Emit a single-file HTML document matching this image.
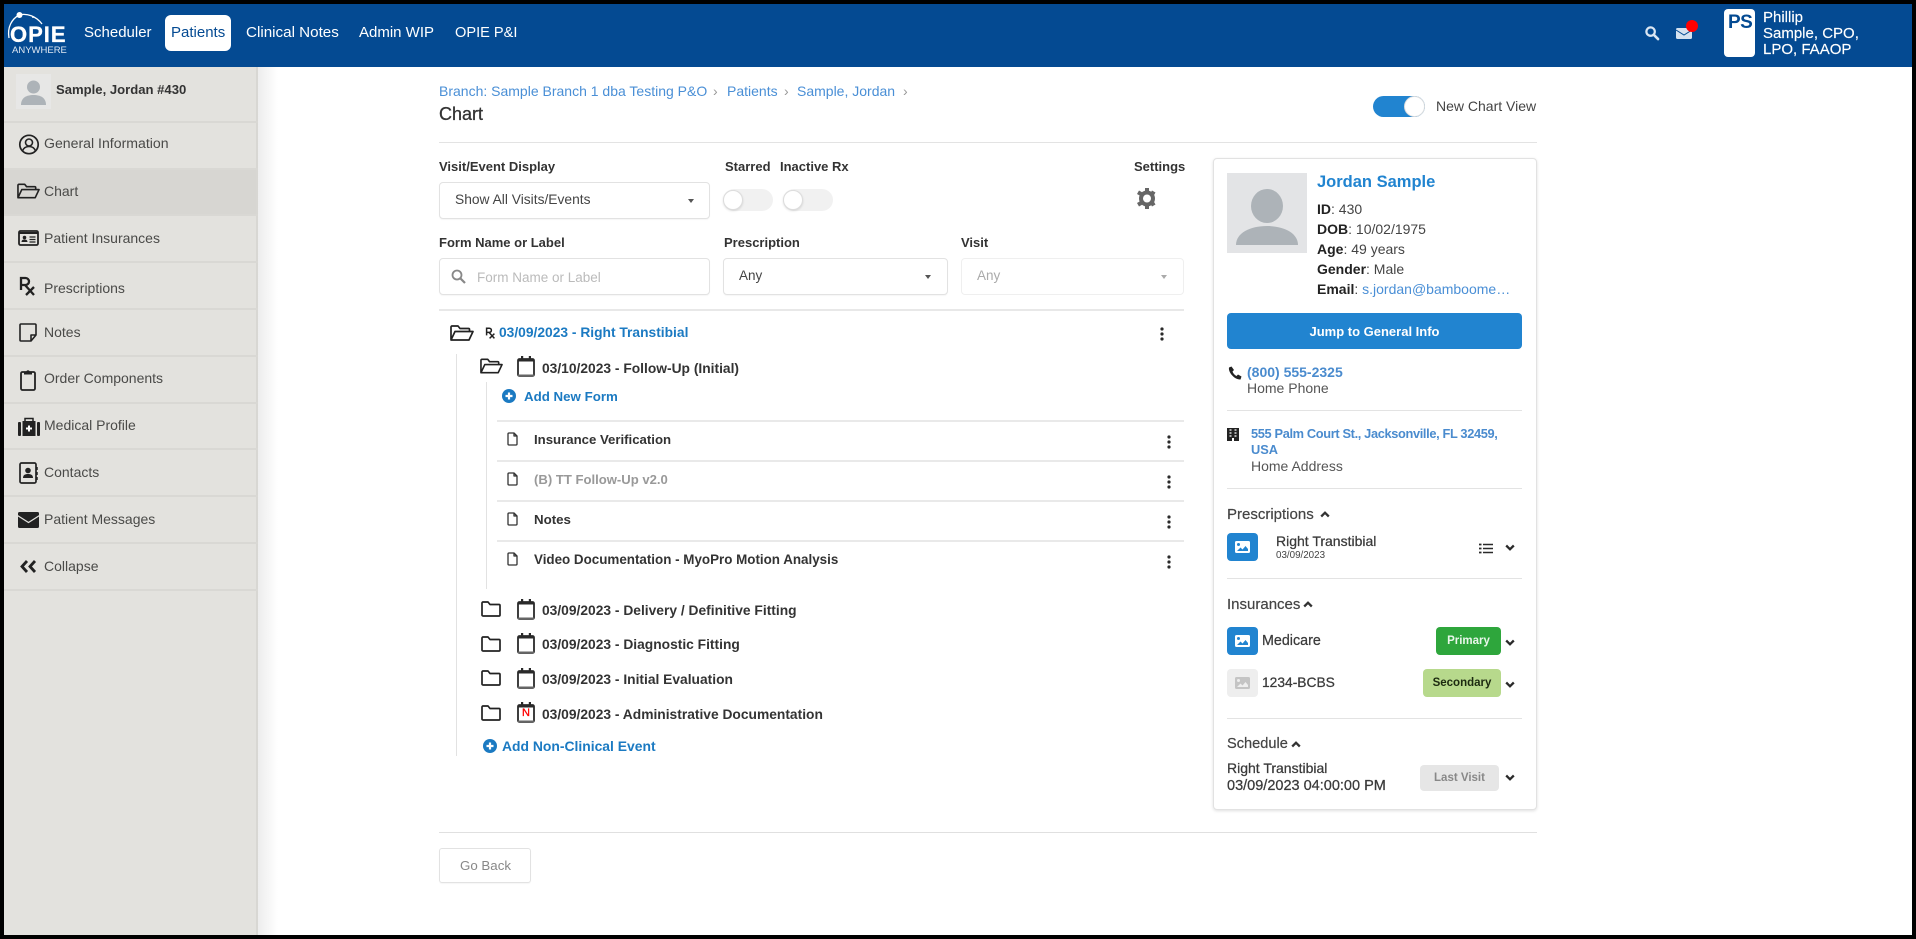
<!DOCTYPE html>
<html><head><meta charset="utf-8"><title>Chart</title>
<style>
*{box-sizing:border-box}
html,body{margin:0;padding:0;width:1916px;height:939px;overflow:hidden;background:#000}
body{font-family:"Liberation Sans",sans-serif;position:relative}
#p{position:absolute;left:0;top:0;width:1916px;height:939px}
.a{position:absolute}
.t{position:absolute;white-space:nowrap;line-height:20px;font-size:14px}
.l{position:absolute;height:1px;background:#e3e3e3}
.b{font-weight:bold}
.nav{color:#fff;font-size:15px;top:23px}
.si{left:44px;color:#4a4a48;font-size:14px}
.sb{position:absolute;left:4px;width:254px;height:2px;background:#d9d8d4}
.lab{font-weight:bold;font-size:13px;color:#333}
.box{position:absolute;border:1px solid #e2e2e2;border-radius:4px;background:#fff;box-shadow:0 1px 1px rgba(0,0,0,.04)}
.tr{font-weight:bold;font-size:13px;color:#333}
.d{font-size:13.800px}
.blue{color:#1b7ac2}
.lk{color:#4a8fd6}
.caret{position:absolute;width:0;height:0;border-left:3.500px solid transparent;border-right:3.500px solid transparent;border-top:4px solid #555}
svg{position:absolute;overflow:visible}
.sw{position:absolute;width:50px;height:22px;border-radius:11px;background:#f1f1f1}
.sw i{position:absolute;left:0;top:1px;width:20px;height:20px;border-radius:50%;background:#fff;border:1px solid #ddd;box-shadow:0 1px 2px rgba(0,0,0,.12)}
.hd{font-size:15px;color:#444;-webkit-text-stroke:.2px #444}
.dk{font-size:14px;color:#3a3a3a;-webkit-text-stroke:.25px #3a3a3a}
.badge{position:absolute;border-radius:4px;text-align:center;font-size:11.500px;font-weight:bold;height:28px;line-height:28px}
.ib{position:absolute;left:1227px;width:31px;height:28px;border-radius:4px;background:#2184d0}
.rl{position:absolute;left:497px;width:687px;height:2px;background:#e9e9e9}
</style></head><body>
<svg width="0" height="0" style="position:absolute">
<defs>
<symbol id="fo" viewBox="0 0 24 16"><path d="M1 14.500V2a1 1 0 0 1 1-1h6l2 2.500h8.500a1 1 0 0 1 1 1V6.500M1 15l4-8.500h18L19 15z" fill="none" stroke="#222" stroke-width="1.700" stroke-linejoin="round"/></symbol>
<symbol id="fc" viewBox="0 0 20 16"><path d="M1 14V2a1 1 0 0 1 1-1h5l2 2.500h9a1 1 0 0 1 1 1V14a1 1 0 0 1-1 1H2a1 1 0 0 1-1-1z" fill="none" stroke="#222" stroke-width="1.700" stroke-linejoin="round"/></symbol>
<symbol id="cal" viewBox="0 0 18 21"><rect x="1" y="3" width="16" height="17" rx="1.500" fill="#fff" stroke="#2a2a2a" stroke-width="1.800"/><rect x="1" y="3" width="16" height="2.500" fill="#2a2a2a"/><rect x="4" y="0" width="2.200" height="4" fill="#2a2a2a"/><rect x="11.800" y="0" width="2.200" height="4" fill="#2a2a2a"/><rect x="1" y="18.500" width="16" height="2" fill="#666"/></symbol>
<symbol id="keb" viewBox="0 0 4 14"><circle cx="2" cy="2" r="1.600" fill="#2a2a2a"/><circle cx="2" cy="7" r="1.600" fill="#2a2a2a"/><circle cx="2" cy="12" r="1.600" fill="#2a2a2a"/></symbol>
<symbol id="file" viewBox="0 0 11 14"><path d="M1 2a1 1 0 0 1 1-1h5l3 3v8a1 1 0 0 1-1 1H2a1 1 0 0 1-1-1zM7 1v3h3" fill="none" stroke="#333" stroke-width="1.300" stroke-linejoin="round"/></symbol>
<symbol id="plus" viewBox="0 0 14 14"><circle cx="7" cy="7" r="7" fill="#1b7ac2"/><path d="M7 3.500v7M3.500 7h7" stroke="#fff" stroke-width="2.200"/></symbol>
<symbol id="dn" viewBox="0 0 10 7"><path d="M1.200 1.500L5 5.300l3.800-3.800" fill="none" stroke="#2a2a2a" stroke-width="2.300"/></symbol>
<symbol id="up" viewBox="0 0 10 7"><path d="M1.200 5.500L5 1.700l3.800 3.800" fill="none" stroke="#333" stroke-width="2.300"/></symbol>
<symbol id="pic" viewBox="0 0 15 12"><rect width="15" height="12" rx="1.500" fill="currentColor"/><circle cx="3.500" cy="3.500" r="1.500" fill="var(--k)"/><path d="M2 10l3.500-3.500 2 2L10.500 5 13 8v2z" fill="var(--k)"/></symbol>
</defs>
</svg>
<div id="p">
<div class="a" style="left:4px;top:4px;width:1908px;height:931px;background:#fff"></div>
<!-- header -->
<div class="a" style="left:4px;top:4px;width:1908px;height:63px;background:#044a92"></div>
<svg style="left:0;top:0" width="70" height="60"><path d="M9 38C7 27 12 19 19 15c8-2 17 1 23 9" fill="none" stroke="#fff" stroke-width="1.300"/><circle cx="19.500" cy="15" r="3" fill="#fff"/><circle cx="33" cy="17" r="1" fill="#fff"/></svg>
<div class="t b" style="left:10px;top:23px;color:#fff;font-size:22px;line-height:24px;letter-spacing:1px;-webkit-text-stroke:.3px #fff">OPIE</div>
<div class="t" style="left:12px;top:45px;color:#dfe8f2;font-size:9.500px;line-height:12px;letter-spacing:0">ANYWHERE</div>
<div class="t nav" style="left:84px">Scheduler</div>
<div class="a" style="left:165px;top:15px;width:66px;height:36px;background:#fff;border-radius:6px"></div>
<div class="t nav" style="left:171px;color:#044a92">Patients</div>
<div class="t nav" style="left:246px;font-size:15.200px">Clinical Notes</div>
<div class="t nav" style="left:359px">Admin WIP</div>
<div class="t nav" style="left:455px;font-size:14.600px">OPIE P&amp;I</div>
<svg style="left:1645px;top:26px" width="14" height="14" viewBox="0 0 15 15"><circle cx="6" cy="6" r="4.500" fill="none" stroke="#dbe6f2" stroke-width="2.400"/><path d="M9.500 9.500L14 14" stroke="#dbe6f2" stroke-width="2.800" stroke-linecap="round"/></svg>
<svg style="left:1676px;top:28px" width="16" height="11" viewBox="0 0 16 11"><rect width="16" height="11" rx="1.500" fill="#d5e2f0"/><path d="M0 2l8 5 8-5" fill="none" stroke="#044a92" stroke-width="1"/></svg>
<div class="a" style="left:1686px;top:20px;width:12px;height:12px;border-radius:50%;background:#f00"></div>
<div class="a" style="left:1724px;top:9px;width:31px;height:48px;background:#fff;border-radius:4px"></div>
<div class="t b" style="left:1728px;top:13px;color:#044a92;font-size:19px;letter-spacing:-.6px">PS</div>
<div class="t" style="left:1763px;top:8px;color:#fff;font-size:15px;-webkit-text-stroke:.15px #fff">Phillip</div>
<div class="t" style="left:1763px;top:24px;color:#fff;font-size:15px;-webkit-text-stroke:.15px #fff">Sample, CPO,</div>
<div class="t" style="left:1763px;top:40px;color:#fff;font-size:15px;-webkit-text-stroke:.15px #fff">LPO, FAAOP</div>

<!-- sidebar -->
<div class="a" style="left:258px;top:67px;width:20px;height:868px;background:linear-gradient(90deg,#ededed,#fff)"></div>
<div class="a" style="left:4px;top:67px;width:254px;height:868px;background:#e3e2de;border-right:2px solid #d8d7d3"></div>
<div class="a" style="left:4px;top:168px;width:252px;height:47px;background:#d7d6d2"></div>
<div class="sb" style="top:121px"></div><div class="sb" style="top:168px"></div><div class="sb" style="top:214px"></div><div class="sb" style="top:261px"></div><div class="sb" style="top:308px"></div><div class="sb" style="top:355px"></div><div class="sb" style="top:402px"></div><div class="sb" style="top:448px"></div><div class="sb" style="top:495px"></div><div class="sb" style="top:542px"></div><div class="sb" style="top:589px"></div>
<div class="a" style="left:16px;top:74px;width:35px;height:35px;background:#e7e7e6"></div>
<svg style="left:16px;top:74px" width="35" height="35" viewBox="0 0 35 35"><circle cx="17.500" cy="13" r="6.500" fill="#adb3b8"/><path d="M5 31c0-7 5-10 12.500-10S30 24 30 31z" fill="#adb3b8"/></svg>
<div class="t b" style="left:56px;top:80px;font-size:13.100px;color:#333">Sample, Jordan #430</div>
<svg style="left:18px;top:134px" width="22" height="21" viewBox="0 0 22 21"><circle cx="11" cy="10.500" r="9.200" fill="none" stroke="#222" stroke-width="1.700"/><circle cx="11" cy="8.500" r="3.500" fill="none" stroke="#222" stroke-width="1.600"/><path d="M4.500 17c1-3 3.500-4.500 6.500-4.500s5.500 1.500 6.500 4.500" fill="none" stroke="#222" stroke-width="1.600"/></svg>
<div class="t si" style="top:133px;font-size:14.100px">General Information</div>
<svg style="left:17px;top:183px" width="23" height="16"><use href="#fo" width="23" height="16"/></svg>
<div class="t si" style="top:181px">Chart</div>
<svg style="left:18px;top:230px" width="21" height="16" viewBox="0 0 21 16"><rect x="1" y="1" width="19" height="14" rx="1.500" fill="none" stroke="#222" stroke-width="1.800"/><path d="M1 3h19" stroke="#222" stroke-width="2"/><circle cx="6.500" cy="7.500" r="1.800" fill="#222"/><path d="M3.500 12c0-2 1.500-2.500 3-2.500s3 .5 3 2.500z" fill="#222"/><path d="M11.500 7h6M11.500 9.500h6M11.500 12h6" stroke="#222" stroke-width="1.200"/></svg>
<div class="t si" style="top:228px">Patient Insurances</div>
<svg style="left:19px;top:276px" width="17" height="20" viewBox="0 0 17 20"><path d="M2 14V2h4.500a3.500 3.500 0 0 1 0 7H2M6 9l9 10M15 11L7 19" fill="none" stroke="#222" stroke-width="2.300"/></svg>
<div class="t si" style="top:278px">Prescriptions</div>
<svg style="left:19px;top:323px" width="18" height="19" viewBox="0 0 18 19"><path d="M2 1h14a1 1 0 0 1 1 1v10l-5 6H2a1 1 0 0 1-1-1V2a1 1 0 0 1 1-1zM17 12h-5v6" fill="none" stroke="#222" stroke-width="1.600" stroke-linejoin="round"/></svg>
<div class="t si" style="top:322px">Notes</div>
<svg style="left:20px;top:368px" width="16" height="23" viewBox="0 0 16 23"><rect x="1" y="4" width="14" height="18" rx="1.500" fill="none" stroke="#222" stroke-width="1.800"/><path d="M4 6.500V3.500h2.300a1.800 1.800 0 0 1 3.400 0H12v3z" fill="#222"/></svg>
<div class="t si" style="top:368px">Order Components</div>
<svg style="left:18px;top:417px" width="22" height="19" viewBox="0 0 22 19"><rect x="4.500" y="4" width="13" height="15" fill="#222"/><rect x="0" y="5" width="3" height="14" rx="1" fill="#222"/><rect x="19" y="5" width="3" height="14" rx="1" fill="#222"/><path d="M7 5V1.500h8V5" fill="none" stroke="#222" stroke-width="1.500"/><path d="M11 8.500v6M8 11.500h6" stroke="#fff" stroke-width="2"/></svg>
<div class="t si" style="top:415px">Medical Profile</div>
<svg style="left:19px;top:462px" width="19" height="22" viewBox="0 0 19 22"><rect x="1" y="1" width="16" height="20" rx="1.500" fill="none" stroke="#222" stroke-width="1.700"/><circle cx="9" cy="8.500" r="2.800" fill="#222"/><path d="M4 16c0-3 2-4 5-4s5 1 5 4z" fill="#222"/><path d="M18 5v3M18 10v3M18 15v3" stroke="#222" stroke-width="1.500"/></svg>
<div class="t si" style="top:462px">Contacts</div>
<svg style="left:18px;top:512px" width="22" height="16" viewBox="0 0 22 16"><rect width="21" height="16" rx="1.500" fill="#222"/><path d="M-.5 3.500L10.500 10.500 21.500 3.500" fill="none" stroke="#e3e2de" stroke-width="1.300"/></svg>
<div class="t si" style="top:509px">Patient Messages</div>
<svg style="left:20px;top:560px" width="17" height="13" viewBox="0 0 17 13"><path d="M7 1L2 6.500 7 12M15 1l-5 5.500 5 5.500" fill="none" stroke="#222" stroke-width="2.800"/></svg>
<div class="t si" style="top:556px">Collapse</div>

<!-- main head -->
<div class="t lk" style="left:439px;top:81px;font-size:14px">Branch: Sample Branch 1 dba Testing P&amp;O</div>
<div class="t" style="left:713px;top:81px;color:#999;font-size:14px">›</div>
<div class="t lk" style="left:727px;top:81px;font-size:14px">Patients</div>
<div class="t" style="left:784px;top:81px;color:#999;font-size:14px">›</div>
<div class="t lk" style="left:797px;top:81px;font-size:14px">Sample, Jordan</div>
<div class="t" style="left:903px;top:81px;color:#999;font-size:14px">›</div>
<div class="t" style="left:439px;top:104px;font-size:18px;color:#333;-webkit-text-stroke:.3px #333">Chart</div>
<div class="a" style="left:1373px;top:96px;width:52px;height:21px;background:#2184d0;border-radius:11px"></div>
<div class="a" style="left:1404px;top:96px;width:21px;height:21px;border-radius:50%;background:#fff;border:1px solid #ddd"></div>
<div class="t" style="left:1436px;top:96px;color:#444;font-size:14px">New Chart View</div>
<div class="l" style="left:439px;top:142px;width:1098px"></div>

<!-- filters -->
<div class="t lab" style="left:439px;top:157px">Visit/Event Display</div>
<div class="t lab" style="left:725px;top:157px">Starred</div>
<div class="t lab" style="left:780px;top:157px">Inactive Rx</div>
<div class="t lab" style="left:1134px;top:157px">Settings</div>
<div class="box" style="left:439px;top:182px;width:271px;height:37px"></div>
<div class="t" style="left:455px;top:190px;font-size:13.800px;color:#444">Show All Visits/Events</div>
<div class="caret" style="left:688px;top:199px"></div>
<div class="sw" style="left:723px;top:189px"><i></i></div>
<div class="sw" style="left:783px;top:189px"><i></i></div>
<svg style="left:1137px;top:188px" width="20" height="21" viewBox="0 0 20 21"><path d="M10 10.500m-6 0a6 6 0 1 0 12 0a6 6 0 1 0-12 0" fill="none" stroke="#666" stroke-width="4"/><path d="M8 0h4v4H8zM8 17h4v4H8zM0 6l2-3.500 3.500 2-2 3.500zM16.500 13l2 3.500-3.500 2-2-3.500zM0 15l2 3.500 3.500-2-2-3.500zM16.500 8l2-3.500-3.500-2-2 3.500z" fill="#666"/></svg>
<div class="t lab" style="left:439px;top:233px">Form Name or Label</div>
<div class="t lab" style="left:724px;top:233px">Prescription</div>
<div class="t lab" style="left:961px;top:233px">Visit</div>
<div class="box" style="left:439px;top:258px;width:271px;height:37px"></div>
<svg style="left:451px;top:269px" width="15" height="15" viewBox="0 0 15 15"><circle cx="6" cy="6" r="4.500" fill="none" stroke="#888" stroke-width="1.800"/><path d="M9.500 9.500L14 14" stroke="#888" stroke-width="2.200"/></svg>
<div class="t" style="left:477px;top:268px;font-size:13.500px;color:#bbb">Form Name or Label</div>
<div class="box" style="left:723px;top:258px;width:225px;height:37px"></div>
<div class="t" style="left:739px;top:266px;font-size:13.500px;color:#444">Any</div>
<div class="caret" style="left:925px;top:275px"></div>
<div class="box" style="left:961px;top:258px;width:223px;height:37px;border-color:#efefef;box-shadow:none"></div>
<div class="t" style="left:977px;top:266px;font-size:13.500px;color:#aaa">Any</div>
<div class="caret" style="left:1161px;top:275px;border-top-color:#aaa"></div>
<div class="a" style="left:439px;top:309px;width:745px;height:2px;background:#e8e8e8"></div>

<!-- tree -->
<svg style="left:450px;top:325px" width="24" height="16"><use href="#fo" width="24" height="16"/></svg>
<svg style="left:485px;top:327px" width="11" height="12" viewBox="0 0 17 20"><path d="M2 14V2h4.500a3.500 3.500 0 0 1 0 7H2M6 9l9 10M15 11L7 19" fill="none" stroke="#222" stroke-width="2.500"/></svg>
<div class="t b blue" style="left:499px;top:323px;font-size:13.800px">03/09/2023 - Right Transtibial</div>
<svg style="left:1160px;top:327px" width="4" height="14"><use href="#keb" width="4" height="14"/></svg>
<div class="a" style="left:456px;top:354px;width:1px;height:402px;background:#e2e2e2"></div>
<svg style="left:480px;top:358px" width="23" height="16"><use href="#fo" width="23" height="16"/></svg>
<svg style="left:517px;top:356px" width="18" height="21"><use href="#cal" width="18" height="21"/></svg>
<div class="t tr d" style="left:542px;top:359px">03/10/2023 - Follow-Up (Initial)</div>
<div class="a" style="left:486px;top:382px;width:1px;height:207px;background:#e2e2e2"></div>
<svg style="left:502px;top:389px" width="14" height="14"><use href="#plus" width="14" height="14"/></svg>
<div class="t b blue" style="left:524px;top:387px;font-size:13.300px">Add New Form</div>
<div class="rl" style="top:420px"></div>
<div class="rl" style="top:460px"></div>
<div class="rl" style="top:500px"></div>
<div class="rl" style="top:540px"></div>
<svg style="left:507px;top:432px" width="11" height="14"><use href="#file" width="11" height="14"/></svg>
<div class="t tr" style="left:534px;top:430px;font-size:13.200px">Insurance Verification</div>
<svg style="left:1167px;top:435px" width="4" height="14"><use href="#keb" width="4" height="14"/></svg>
<svg style="left:507px;top:472px" width="11" height="14"><use href="#file" width="11" height="14"/></svg>
<div class="t tr" style="left:534px;top:470px;color:#999;font-size:13.100px">(B) TT Follow-Up v2.0</div>
<svg style="left:1167px;top:475px" width="4" height="14"><use href="#keb" width="4" height="14"/></svg>
<svg style="left:507px;top:512px" width="11" height="14"><use href="#file" width="11" height="14"/></svg>
<div class="t tr" style="left:534px;top:510px;font-size:13.300px">Notes</div>
<svg style="left:1167px;top:515px" width="4" height="14"><use href="#keb" width="4" height="14"/></svg>
<svg style="left:507px;top:552px" width="11" height="14"><use href="#file" width="11" height="14"/></svg>
<div class="t tr" style="left:534px;top:550px;font-size:13.400px">Video Documentation - MyoPro Motion Analysis</div>
<svg style="left:1167px;top:555px" width="4" height="14"><use href="#keb" width="4" height="14"/></svg>

<svg style="left:481px;top:601px" width="20" height="16"><use href="#fc" width="20" height="16"/></svg>
<svg style="left:517px;top:599px" width="18" height="21"><use href="#cal" width="18" height="21"/></svg>
<div class="t tr d" style="left:542px;top:601px">03/09/2023 - Delivery / Definitive Fitting</div>
<svg style="left:481px;top:636px" width="20" height="16"><use href="#fc" width="20" height="16"/></svg>
<svg style="left:517px;top:633px" width="18" height="21"><use href="#cal" width="18" height="21"/></svg>
<div class="t tr d" style="left:542px;top:635px">03/09/2023 - Diagnostic Fitting</div>
<svg style="left:481px;top:670px" width="20" height="16"><use href="#fc" width="20" height="16"/></svg>
<svg style="left:517px;top:668px" width="18" height="21"><use href="#cal" width="18" height="21"/></svg>
<div class="t tr d" style="left:542px;top:670px">03/09/2023 - Initial Evaluation</div>
<svg style="left:481px;top:705px" width="20" height="16"><use href="#fc" width="20" height="16"/></svg>
<svg style="left:517px;top:702px" width="18" height="21"><use href="#cal" width="18" height="21"/></svg>
<div class="t" style="left:522px;top:705px;font-size:11px;line-height:16px;color:#f00;-webkit-text-stroke:.3px #f00">N</div>
<div class="t tr d" style="left:542px;top:705px">03/09/2023 - Administrative Documentation</div>
<svg style="left:483px;top:739px" width="14" height="14"><use href="#plus" width="14" height="14"/></svg>
<div class="t b blue" style="left:502px;top:736px;font-size:13.900px">Add Non-Clinical Event</div>
<div class="a" style="left:439px;top:832px;width:1098px;height:1px;background:#e0e0e0"></div>
<div class="box" style="left:439px;top:848px;width:92px;height:35px;border-radius:3px"></div>
<div class="t" style="left:460px;top:856px;font-size:13.300px;color:#888">Go Back</div>

<!-- card -->
<div class="a" style="left:1213px;top:158px;width:324px;height:652px;background:#fff;border:1px solid #e2e2e2;border-radius:4px;box-shadow:0 1px 3px rgba(0,0,0,.13)"></div>
<div class="a" style="left:1227px;top:173px;width:80px;height:80px;background:#e3e4e6"></div>
<svg style="left:1227px;top:173px" width="80" height="80" viewBox="0 0 80 80"><ellipse cx="40" cy="33" rx="16" ry="17" fill="#adb3b8"/><path d="M9 72c0-12 14-19 31-19s31 7 31 19z" fill="#adb3b8"/></svg>
<div class="t b" style="left:1317px;top:172px;font-size:16.500px;color:#2184d0">Jordan Sample</div>
<div class="t" style="left:1317px;top:199px;color:#444"><b style="color:#222">ID</b>: 430</div>
<div class="t" style="left:1317px;top:219px;color:#444"><b style="color:#222">DOB</b>: 10/02/1975</div>
<div class="t" style="left:1317px;top:239px;color:#444"><b style="color:#222">Age</b>: 49 years</div>
<div class="t" style="left:1317px;top:259px;color:#444"><b style="color:#222">Gender</b>: Male</div>
<div class="t" style="left:1317px;top:279px;color:#444"><b style="color:#222">Email</b>: <span class="lk">s.jordan@bamboome…</span></div>
<div class="a" style="left:1227px;top:313px;width:295px;height:36px;background:#2184d0;border-radius:4px"></div>
<div class="t b" style="left:1227px;top:322px;width:295px;text-align:center;color:#fff;font-size:13px">Jump to General Info</div>
<svg style="left:1228px;top:366px" width="14" height="14" viewBox="0 0 14 14"><path d="M3.500.5L1 1.500C0 6 6.500 14 12.500 13.500l1-3-3.500-2-1.500 1.500C6.500 9 5 7 4.500 5.500L6 4z" fill="#222"/></svg>
<div class="t b" style="left:1247px;top:362px;font-size:14px;color:#4a8bce">(800) 555-2325</div>
<div class="t" style="left:1247px;top:378px;color:#555">Home Phone</div>
<div class="l" style="left:1227px;top:410px;width:295px"></div>
<svg style="left:1227px;top:428px" width="12" height="13" viewBox="0 0 12 13"><rect width="12" height="13" fill="#222"/><path d="M2.500 2h2M7.500 2h2M2.500 5h2M7.500 5h2M2.500 8h2M7.500 8h2" stroke="#fff" stroke-width="1.200"/><rect x="5" y="10" width="2" height="3" fill="#fff"/></svg>
<div class="t b" style="left:1251px;top:424px;font-size:12.800px;letter-spacing:-.35px;color:#4a8bce">555 Palm Court St., Jacksonville, FL 32459,</div>
<div class="t b" style="left:1251px;top:440px;font-size:12.800px;color:#4a8bce">USA</div>
<div class="t" style="left:1251px;top:456px;color:#555">Home Address</div>
<div class="l" style="left:1227px;top:488px;width:295px"></div>
<div class="t hd" style="left:1227px;top:505px">Prescriptions</div>
<svg style="left:1320px;top:511px" width="10" height="7"><use href="#up" width="10" height="7"/></svg>
<div class="ib" style="top:533px"></div>
<svg style="left:1235px;top:541px;--k:#2184d0;color:#fff" width="15" height="12"><use href="#pic" width="15" height="12"/></svg>
<div class="t dk" style="left:1276px;top:531px">Right Transtibial</div>
<div class="t" style="left:1276px;top:546px;font-size:9.800px;color:#444">03/09/2023</div>
<svg style="left:1479px;top:543px" width="14" height="11" viewBox="0 0 14 11"><path d="M4 1.500h10M4 5.500h10M4 9.500h10" stroke="#2a2a2a" stroke-width="1.600"/><path d="M0 1.500h2.500M0 5.500h2.500M0 9.500h2.500" stroke="#2a2a2a" stroke-width="1.800"/></svg>
<svg style="left:1505px;top:544px" width="10" height="7"><use href="#dn" width="10" height="7"/></svg>
<div class="l" style="left:1227px;top:578px;width:295px"></div>
<div class="t hd" style="left:1227px;top:595px">Insurances</div>
<svg style="left:1303px;top:601px" width="10" height="7"><use href="#up" width="10" height="7"/></svg>
<div class="ib" style="top:627px"></div>
<svg style="left:1235px;top:635px;--k:#2184d0;color:#fff" width="15" height="12"><use href="#pic" width="15" height="12"/></svg>
<div class="t dk" style="left:1262px;top:631px;font-size:14.300px">Medicare</div>
<div class="badge" style="left:1436px;top:627px;width:65px;background:#2ea63c;color:#e9f6ea">Primary</div>
<svg style="left:1505px;top:639px" width="10" height="7"><use href="#dn" width="10" height="7"/></svg>
<div class="ib" style="top:669px;background:#eee"></div>
<svg style="left:1235px;top:677px;--k:#eee;color:#c4c4c4" width="15" height="12"><use href="#pic" width="15" height="12"/></svg>
<div class="t dk" style="left:1262px;top:673px;font-size:13.800px">1234-BCBS</div>
<div class="badge" style="left:1423px;top:669px;width:78px;background:#b7d98c;color:#1c2a10">Secondary</div>
<svg style="left:1505px;top:681px" width="10" height="7"><use href="#dn" width="10" height="7"/></svg>
<div class="l" style="left:1227px;top:718px;width:295px"></div>
<div class="t hd" style="left:1227px;top:734px;font-size:14.600px">Schedule</div>
<svg style="left:1291px;top:741px" width="10" height="7"><use href="#up" width="10" height="7"/></svg>
<div class="t dk" style="left:1227px;top:758px">Right Transtibial</div>
<div class="t dk" style="left:1227px;top:776px;font-size:14.500px">03/09/2023 04:00:00 PM</div>
<div class="badge" style="left:1420px;top:765px;width:79px;height:26px;line-height:26px;background:#e6e6e6;color:#888">Last Visit</div>
<svg style="left:1505px;top:774px" width="10" height="7"><use href="#dn" width="10" height="7"/></svg>
</div>
</body></html>
